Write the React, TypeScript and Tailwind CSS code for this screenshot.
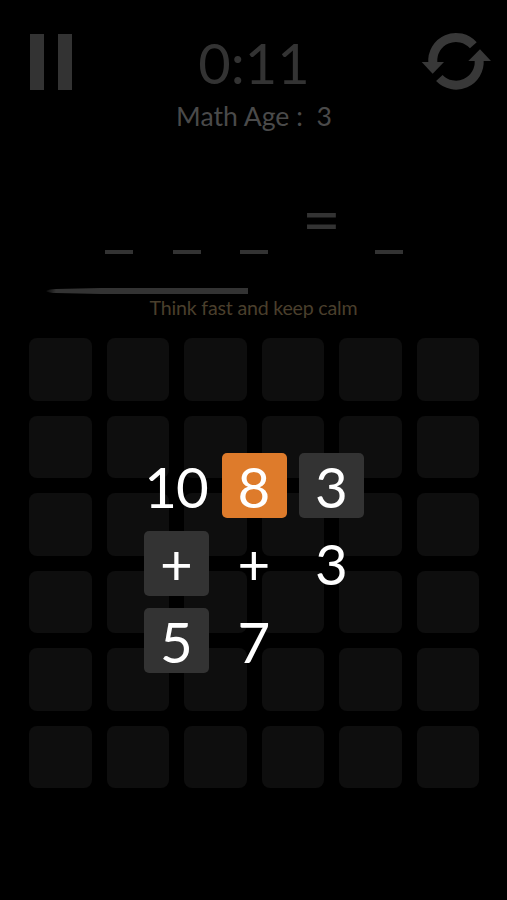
import React from 'react';

type Tile = { label: string; kind?: 'active' | 'used' };

const TILES: Tile[] = [
  { label: '10' },
  { label: '8', kind: 'active' },
  { label: '3', kind: 'used' },
  { label: '+', kind: 'used' },
  { label: '+' },
  { label: '3' },
  { label: '5', kind: 'used' },
  { label: '7' },
];

function tileColor(kind?: Tile['kind']) {
  if (kind === 'active') return 'bg-[#de7b2b]';
  if (kind === 'used') return 'bg-[#333333]';
  return '';
}

function PauseIcon() {
  return (
    <div className="flex w-[56px] gap-[14px]">
      <div className="h-[56px] w-[14px] bg-[#333333]" />
      <div className="h-[56px] w-[14px] bg-[#333333]" />
    </div>
  );
}

function RestartIcon() {
  return (
    <svg className="overflow-visible" width="72" height="60" viewBox="60 42 216 180" fill="none">
      <g stroke="#383838" strokeWidth="27">
        <path d="M98.5 128A69.5 69.5 0 0 1 220 76" />
        <path d="M237.5 121A69.5 69.5 0 0 1 118 174" />
      </g>
      <path d="M65 126H132L98 161Z" fill="#383838" />
      <path d="M205 123H273L240 88Z" fill="#383838" />
    </svg>
  );
}

/** Empty operand slot in the equation row. */
function Slot() {
  return <div className="mt-[50px] h-[4px] w-[28px] bg-[#333333]" />;
}

function Header() {
  return (
    <header className="flex h-[150px] items-start justify-between pt-[34px] pr-[15px] pl-[30px]">
      <PauseIcon />
      <div className="w-[200px] text-center">
        <div className="ml-[2px] text-[56px] leading-[58px] whitespace-pre text-[#333333]">0:11</div>
        <div className="mt-[6px] ml-[2px] text-[26.6px] leading-[36px] whitespace-pre text-[#4a4a4a]">
          {'Math Age :  3'}
        </div>
      </div>
      <RestartIcon />
    </header>
  );
}

export default function App() {
  return (
    <main className="h-[900px] w-[507px] overflow-hidden bg-black font-['Lato',sans-serif]">
      <Header />

      {/* Equation */}
      <div className="mt-[50px] ml-[105px] flex h-[88px] w-[298px] items-start justify-between">
        <Slot />
        <Slot />
        <Slot />
        <div className="-mt-[11px] flex w-[28px] justify-center text-[67px] leading-[58px] text-[#333333]">
          <span>=</span>
        </div>
        <Slot />
      </div>

      {/* Time left */}
      <svg className="ml-[46px] block" width="202" height="6" viewBox="0 0 202 6">
        <defs>
          <linearGradient id="tail" x1="0" x2="1">
            <stop offset="0" stopColor="#333333" stopOpacity="0.2" />
            <stop offset="0.05" stopColor="#333333" />
          </linearGradient>
        </defs>
        <path d="M0 3Q3 1 10 0.9L55 0H202V6H55L10 5.1Q3 5 0 3Z" fill="url(#tail)" />
      </svg>
      <p className="mt-[1px] h-[43px] text-center text-[19.6px] leading-[26px] tracking-[-0.2px] text-[#4a3f2c]">
        Think fast and keep calm
      </p>

      <section className="relative ml-[29px] w-[450px]">
        <div className="grid grid-cols-6 gap-[15px]">
          {Array.from({ length: 36 }, (_, i) => (
            <div key={i} className="h-[62.5px] rounded-[8px] bg-[#0e0e0e]" />
          ))}
        </div>

        {/* Playable tiles over the dimmed board */}
        <div className="absolute top-[115px] left-[115px] grid grid-cols-[65px_65px_65px] gap-[12.5px]">
          {TILES.map((tile, i) => (
            <div
              key={i}
              className={`flex h-[65px] items-center justify-center rounded-[5px] pt-px pr-px text-[56.5px] leading-none tracking-[-1px] text-white ${tileColor(tile.kind)}`}
            >
              {tile.label}
            </div>
          ))}
        </div>
      </section>
    </main>
  );
}
